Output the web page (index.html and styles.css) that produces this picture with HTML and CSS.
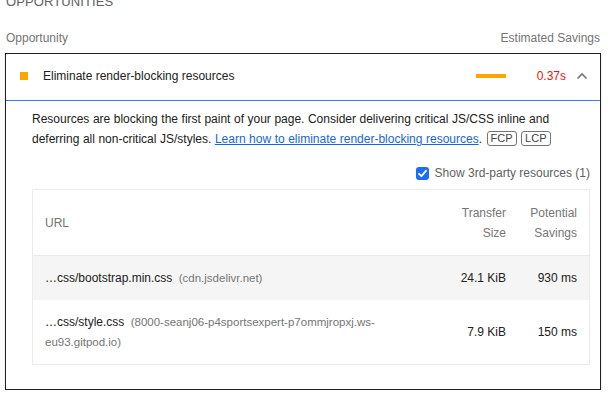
FILE: index.html
```html
<!DOCTYPE html>
<html lang="en">
<head>
<meta charset="utf-8">
<title>Opportunities</title>
<link rel="stylesheet" href="styles.css">
</head>
<body>
<div class="page">
  <h2 class="group-title">Opportunities</h2>
  <div class="columns-head">
    <span>Opportunity</span>
    <span>Estimated Savings</span>
  </div>
  <div class="audit">
    <div class="audit-head">
      <span class="score-square"></span>
      <span class="audit-title">Eliminate render-blocking resources</span>
      <span class="sparkline"><span class="spark-bar"></span></span>
      <span class="display-value">0.37s</span>
      <svg class="chevron" width="12" height="8" viewBox="0 0 12 8"><path d="M1.5 6.5 L6 2 L10.5 6.5" fill="none" stroke="#757575" stroke-width="1.6"/></svg>
    </div>
    <div class="audit-body">
      <p class="desc">Resources are blocking the first paint of your page. Consider delivering critical JS/CSS inline and deferring all non-critical JS/styles. <a class="link" href="#">Learn how to eliminate render-blocking resources</a>. <span class="badge">FCP</span> <span class="badge">LCP</span></p>
      <div class="third-party">
        <svg class="checkbox" width="13" height="13" viewBox="0 0 13 13"><rect x="0" y="0" width="13" height="13" rx="3" fill="#1a6ef5"/><path d="M3 6.8 L5.4 9.2 L10 3.8" fill="none" stroke="#fff" stroke-width="1.8" stroke-linecap="round" stroke-linejoin="round"/></svg>
        <span>Show 3rd-party resources (1)</span>
      </div>
      <div class="table">
        <div class="th th-url">URL</div>
        <div class="th num">Transfer Size</div>
        <div class="th num">Potential Savings</div>

        <div class="td url shaded">…css/bootstrap.min.css <span class="host">(cdn.jsdelivr.net)</span></div>
        <div class="td num shaded">24.1 KiB</div>
        <div class="td num shaded">930 ms</div>

        <div class="td url">…css/style.css <span class="host">(8000-seanj06-p4sportsexpert-p7ommjropxj.ws-eu93.gitpod.io)</span></div>
        <div class="td num">7.9 KiB</div>
        <div class="td num">150 ms</div>
      </div>
    </div>
  </div>
</div>
</body>
</html>
```
FILE: styles.css
```css
* { box-sizing: border-box; }
html, body { margin: 0; padding: 0; background: #fff; }
body {
  font-family: "Liberation Sans", Arial, sans-serif;
  font-size: 12px;
  color: #212121;
  overflow: hidden;
}
.page {
  margin-left: 5px;
  width: 596px;
}
.group-title {
  margin: -6px 0 0 1px;
  font-size: 13px;
  line-height: 16px;
  font-weight: normal;
  text-transform: uppercase;
  color: #616161;
  letter-spacing: 0.1px;
}
.columns-head {
  display: flex;
  justify-content: space-between;
  margin-top: 20px;
  padding: 0 1px;
  line-height: 16px;
  color: #757575;
}
.audit {
  margin-top: 7px;
  border: 1px solid #202124;
  box-shadow: 0 1px 2px rgba(0,0,0,0.15);
  padding-bottom: 24px;
}
.audit-head {
  display: flex;
  align-items: center;
  height: 47px;
  padding: 0 12px 0 14px;
  border-bottom: 1px solid #3b78e7;
}
.score-square {
  width: 8px;
  height: 8px;
  background: #ffa400;
  flex: none;
  margin-top: -2px;
}
.audit-title {
  margin-left: 15px;
  flex: 1;
  margin-top: -2px;
}
.sparkline {
  width: 30px;
  margin-right: 31px;
  display: flex;
  margin-top: -3px;
}
.spark-bar {
  width: 30px;
  height: 4px;
  background: #ffa400;
}
.display-value {
  color: #e8170b;
  margin-top: -2px;
}
.chevron {
  margin-left: 10px;
  margin-top: -3px;
}
.audit-body {
  padding: 8px 10px 0 26px;
}
.desc {
  margin: 0;
  line-height: 20px;
  word-spacing: 0.2px;
}
.link {
  color: #1565e3;
  text-decoration: underline;
}
.badge {
  display: inline-block;
  font-size: 11px;
  line-height: 13px;
  padding: 0 3px;
  border: 1px solid #757575;
  border-radius: 3px;
  color: #424242;
  margin-left: 1px;
  vertical-align: 1px;
}
.third-party {
  display: flex;
  justify-content: flex-end;
  align-items: center;
  gap: 6px;
  margin-top: 14px;
  line-height: 20px;
  color: #616161;
}
.checkbox { flex: none; }
.table {
  margin-top: 6px;
  display: grid;
  grid-template-columns: 1fr 72px 71px;
  border: 1px solid #ebebeb;
  line-height: 20px;
}
.th {
  color: #757575;
  padding: 13px 12px 12px 12px;
  border-bottom: 1px solid #ebebeb;
  display: flex;
  align-items: center;
}
.th.num { justify-content: flex-end; text-align: right; padding-left: 4px; }
.td {
  padding: 12px 12px;
  display: flex;
  align-items: center;
}
.td.url { display: block; padding-right: 14px; }
.td.num { justify-content: flex-end; padding-left: 4px; }
.shaded { background: #f5f5f5; }
.host {
  font-size: 11.5px;
  color: #757575;
  margin-left: 3px;
}
```
